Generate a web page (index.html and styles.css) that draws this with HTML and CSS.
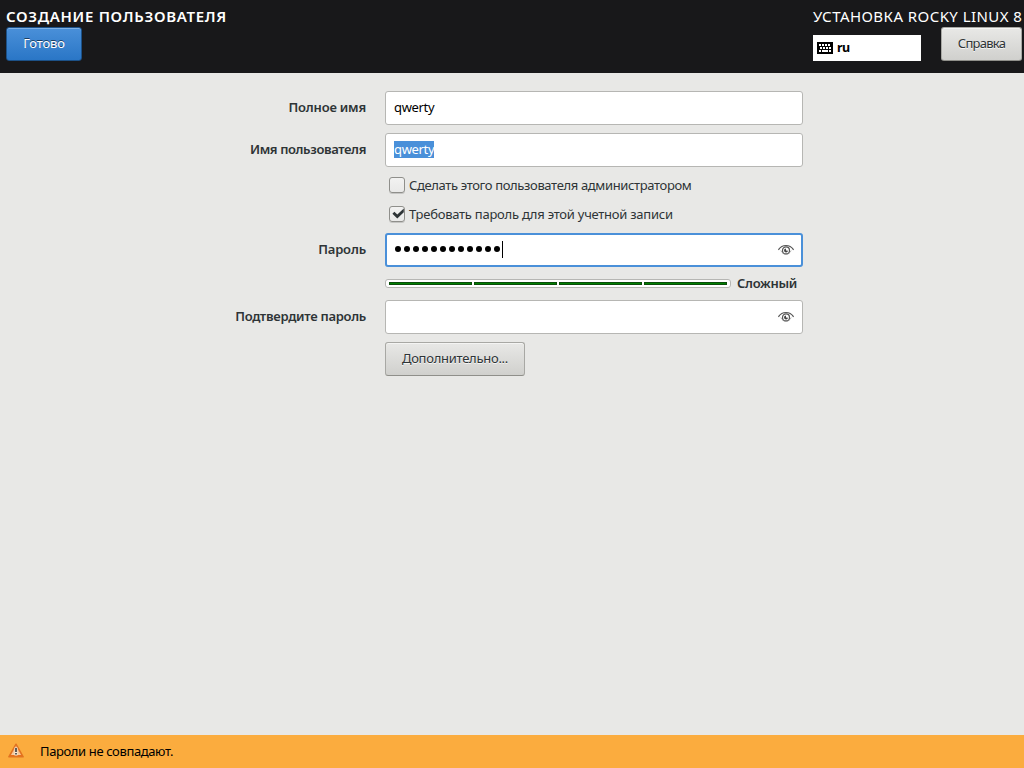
FILE: index.html
```html
<!DOCTYPE html>
<html lang="ru">
<head>
<meta charset="utf-8">
<title>Создание пользователя</title>
<link rel="stylesheet" href="styles.css">
</head>
<body>
<svg class="defs" width="0" height="0">
  <symbol id="eye" viewBox="0 0 16 12">
    <path d="M.4 5.800C2.500 2.700 5 1.500 8 1.500s5.500 1.200 7.600 4.300" fill="none" stroke="#555" stroke-width="1.200"/>
    <circle cx="8" cy="6.400" r="3.500" fill="none" stroke="#555" stroke-width="1.200"/>
    <path d="M8 4.400A2 2 0 1 0 10 6.700L8 6.400z" fill="#444"/>
    <path d="M2.800 6.500C4 9 5.800 10.300 8 10.300s4-1.300 5.200-3.800" fill="none" stroke="#888" stroke-width=".6"/>
  </symbol>
</svg>
<header class="header">
  <div class="header-left">
    <h1 class="title"><span class="t-title">СОЗДАНИЕ ПОЛЬЗОВАТЕЛЯ</span></h1>
    <button class="button primary"><span class="t-done">Готово</span></button>
  </div>
  <div class="header-right">
    <div class="product"><span class="t-product">УСТАНОВКА ROCKY LINUX 8</span></div>
    <div class="tools">
      <div class="layout">
        <svg width="16" height="12" viewBox="0 0 16 12" shape-rendering="crispEdges">
          <rect width="16" height="12" rx="1" fill="#000"/>
          <path d="M2 2h2v2H2zM5 2h2v2H5zM8 2h2v2H8zM11 2h2v2h-2zM3 5h2v2H3zM6 5h2v2H6zM9 5h2v2H9zM12 5h2v2h-2zM2 8h2v2H2zM5 8h6v2H5zM12 8h2v2h-2z" fill="#fff"/>
        </svg>
        <span class="t-layout">ru</span>
      </div>
      <button class="button help"><span class="t-help">Справка</span></button>
    </div>
  </div>
</header>
<main class="form">
  <label class="label"><span class="t-full">Полное имя</span></label>
  <div class="entry"><span class="value">qwerty</span></div>
  <label class="label"><span class="t-user">Имя пользователя</span></label>
  <div class="entry"><span class="value selected">qwerty</span></div>
  <div class="check first"><span class="box"></span><span class="t-admin">Сделать этого пользователя администратором</span></div>
  <div class="check second"><span class="box"><svg width="16" height="16" viewBox="0 0 16 16"><path d="M3.400 7.800 5.400 5.800 8.300 8.500 14.800 2.400v3.800L8.300 12.400z" fill="#2e3436"/></svg></span><span class="t-require">Требовать пароль для этой учетной записи</span></div>
  <label class="label"><span class="t-pass">Пароль</span></label>
  <div class="entry focused"><span class="dots"><i></i><i></i><i></i><i></i><i></i><i></i><i></i><i></i><i></i><i></i><i></i><i></i></span><span class="caret"></span><svg class="eye" width="16" height="12"><use href="#eye"/></svg></div>
  <div class="strength"><div class="meter"><i></i><i></i><i></i><i></i></div><span class="t-strong">Сложный</span></div>
  <label class="label"><span class="t-confirm">Подтвердите пароль</span></label>
  <div class="entry"><svg class="eye" width="16" height="12"><use href="#eye"/></svg></div>
  <button class="button advanced"><span class="t-advanced">Дополнительно...</span></button>
</main>
<footer class="warning">
  <svg width="16" height="16" viewBox="0 0 16 16">
    <defs><linearGradient id="w" x2="0" y2="1"><stop stop-color="#f59a50"/><stop offset="1" stop-color="#e96a14"/></linearGradient><linearGradient id="g" x2="0" y2="1"><stop stop-color="#f3a368"/><stop offset="1" stop-color="#f7cfa4"/></linearGradient></defs>
    <path d="M8 1.200 15.200 13.800H.8z" fill="url(#w)" stroke="#e27320" stroke-width="1.400" stroke-linejoin="round"/>
    <path d="M8 2.800 13 12H3z" fill="url(#g)"/>
    <path d="M6.500 4.500h3v8h-3z" fill="#f6ead8"/>
    <path d="M7.200 5h1.600v4H7.200zM7.200 10h1.600v1.600H7.200z" fill="#383838"/>
  </svg>
  <span class="t-warning">Пароли не совпадают.</span>
</footer>
</body>
</html>
```
FILE: styles.css
```css
* { box-sizing: border-box; }
body {
  margin: 0; width: 1024px; height: 768px; overflow: hidden;
  display: flex; flex-direction: column;
  background: #e8e8e6; color: #2e3436;
  font: 13px/18px "Noto Sans", sans-serif;
  white-space: nowrap;
}
.defs { position: absolute; }
.header {
  height: 73px; background: #18181a; color: #fff;
  display: flex; justify-content: space-between; padding: 6px 2px 0 6px;
}
.title, .product { margin: 0; height: 21px; font-size: 15px; line-height: 21px; }
.title { font-weight: 600; }
.header-right { width: 209px; }
.product { font-weight: 400; }
.tools { display: flex; justify-content: space-between; }
.layout {
  width: 108px; height: 26px; margin-top: 8px; padding-left: 4px;
  display: flex; align-items: center; gap: 4px;
  background: #fff; color: #000; font-size: 12.5px; font-weight: 700;
}
.button {
  height: 34px; padding: 0 0 2px; display: flex; align-items: center; justify-content: center;
  border: 1px solid #a8a8a4; border-bottom-color: #8f8f8a; border-radius: 3px;
  background: linear-gradient(#e8e8e6, #d0d0cd); box-shadow: inset 0 1px #f4f4f3;
  color: #2e3436; font: inherit; text-shadow: 0 1px rgba(255,255,255,.77);
}
.primary {
  width: 76px; border-color: #1c5187; color: #fff;
  background: linear-gradient(#4a90d9, #2a76c6); box-shadow: inset 0 1px #80b1e4;
  text-shadow: 0 -1px rgba(0,0,0,.55);
}
.help { width: 81px; }
.form {
  flex: 1; padding: 18px 0 0 200px; display: grid; align-content: start;
  grid-template-columns: 166px 418px; column-gap: 19px;
  grid-template-rows: 34px 8px 34px 8px 20px 9px 20px 9px 34px 8px 17px 8px 34px 8px 34px;
}
.label { grid-column: 1; align-self: center; text-align: right; font-weight: 600; padding-bottom: 2px; }
.entry, .check, .strength, .advanced { grid-column: 2; }
.form > :nth-child(-n+2) { grid-row: 1; }
.form > :nth-child(3), .form > :nth-child(4) { grid-row: 3; }
.check.first { grid-row: 5; }
.check.second { grid-row: 7; }
.form > :nth-child(7), .form > :nth-child(8) { grid-row: 9; }
.strength { grid-row: 11; }
.form > :nth-child(10), .form > :nth-child(11) { grid-row: 13; }
.advanced { grid-row: 15; width: 140px; }
.entry {
  border: 1px solid #b6b6b3; border-radius: 3px; background: #fff; color: #000;
  padding: 0 8px 1px; display: flex; align-items: center;
}
.value { line-height: 17px; letter-spacing: -.33px; }
.selected { background: #4a90d9; color: #fff; }
.focused { border: 2px solid #4a90d9; padding: 0 7px 1px; }
.dots { display: flex; gap: 3px; padding: 0 2px 2px 1px; }
.dots i { width: 6px; height: 6px; border-radius: 50%; background: #000; }
.caret { width: 1px; height: 17px; background: #000; }
.eye { margin-left: auto; }
.check { display: flex; align-items: center; gap: 4px; padding-left: 4px; }
.box {
  width: 16px; height: 16px; border: 1px solid #8f8f8b; border-radius: 3px;
  background: linear-gradient(#f2f2f1, #e9e9e8); box-shadow: 0 1px rgba(0,0,0,.15);
}
.box svg { display: block; margin: -1px; }
.strength { display: flex; align-items: center; gap: 6px; font-weight: 600; }
.meter {
  width: 346px; height: 9px; padding: 2px 3px; display: flex; gap: 2px;
  border: 1px solid #b6b6b3; border-radius: 3px; background: #fff;
}
.meter i { width: 83px; height: 3px; background: #008000; border: 1px solid #094b09; }
.warning {
  height: 33px; padding: 0 0 2px 8px; display: flex; align-items: center; gap: 16px;
  background: #fbac3e; color: #000;
}
.t-title { letter-spacing: .7px; }
.t-product { letter-spacing: .45px; }
.t-layout { letter-spacing: -.5px; }
.t-done { letter-spacing: -.15px; }
.t-help { letter-spacing: -.75px; }
.t-full { letter-spacing: -.2px; }
.t-user { letter-spacing: -.38px; }
.t-admin { letter-spacing: -.36px; }
.t-require { letter-spacing: -.25px; }
.t-pass { letter-spacing: -.15px; }
.t-strong { letter-spacing: -.3px; margin-bottom: 2px; }
.t-confirm { letter-spacing: -.28px; }
.t-advanced { letter-spacing: -.27px; }
.t-warning { letter-spacing: -.38px; }
```
